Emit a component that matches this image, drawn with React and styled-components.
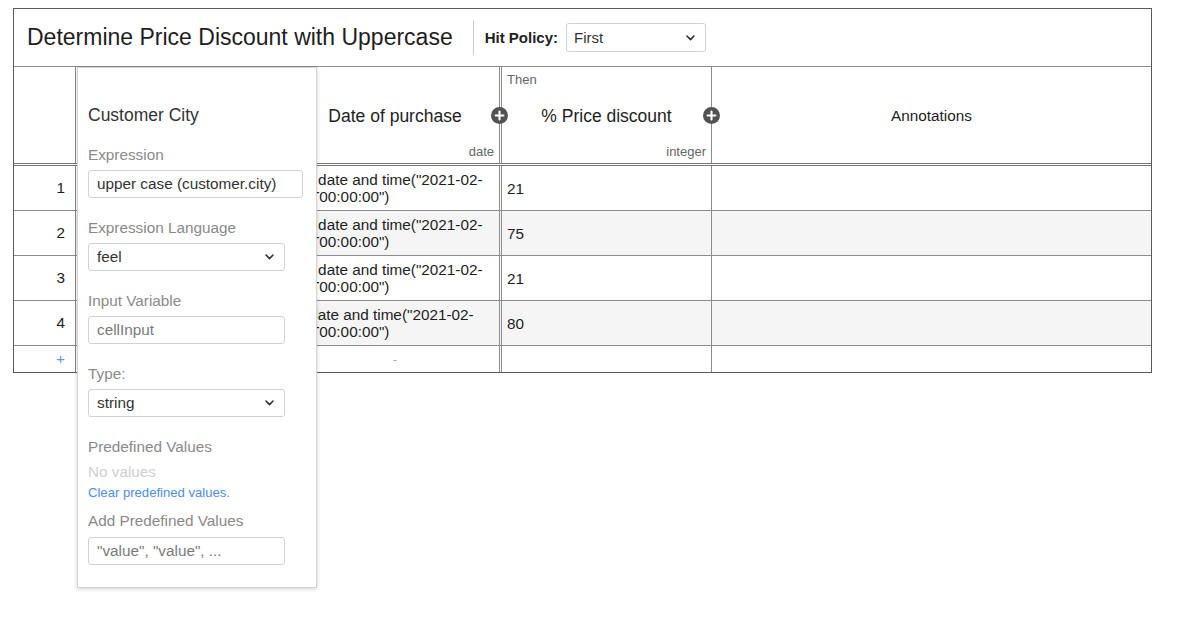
import React from 'react';
import styled, { createGlobalStyle } from 'styled-components';

const FONT = `"Liberation Sans", Arial, Helvetica, sans-serif`;
const LINE = '#8c8c8c';

const GlobalStyle = createGlobalStyle`
  html, body { margin: 0; padding: 0; background: #fff; }
  body { font-family: ${FONT}; color: #222; }
  *, *::before, *::after { box-sizing: border-box; }
`;

const Page = styled.div`
  width: 1190px;
  height: 644px;
  padding: 8px 0 0 13px;
`;

const Container = styled.div`
  position: relative;
  width: 1139px;
  border: 1px solid #5a5a5a;
`;

const TitleBar = styled.div`
  display: flex;
  align-items: center;
  height: 58px;
  padding-left: 13px;
  border-bottom: 1px solid ${LINE};
`;

const Title = styled.h1`
  margin: 0 20px 0 0;
  font-size: 23px;
  font-weight: normal;
  line-height: 1;
  color: #1e1e1e;
  white-space: nowrap;
`;

const HitPolicy = styled.div`
  display: flex;
  align-items: center;
  gap: 8px;
  height: 35px;
  padding-left: 11px;
  border-left: 1px solid #c8c8c8;
`;

const HitLabel = styled.span`
  font-size: 15px;
  font-weight: bold;
  color: #222;
`;

const SelectBox = styled.div`
  display: flex;
  align-items: center;
  justify-content: space-between;
  width: ${(p) => p.$width}px;
  height: ${(p) => p.$height}px;
  padding: 0 10px 0 ${(p) => p.$padLeft}px;
  border: 1px solid #d2d2d2;
  border-radius: 3px;
  background: #fff;
  font-size: ${(p) => p.$size}px;
  color: #333;
`;

const Row = styled.div`
  display: grid;
  grid-template-columns: 62px 215px 211px 210px 1fr;
  height: ${(p) => p.$h}px;
  border-bottom: ${(p) => p.$bottom || `1px solid ${LINE}`};
  background: ${(p) => (p.$alt ? '#f5f5f5' : '#fff')};
`;

const cellBorder = (p) =>
  p.$last ? 'none' : p.$double ? `3px double ${LINE}` : `1px solid ${LINE}`;

const HeadCell = styled.div`
  position: relative;
  display: grid;
  grid-template-rows: 15px 1fr 15px;
  padding: 5px 5px 4px;
  border-right: ${cellBorder};
  background: #fff;
`;

const TopLabel = styled.div`
  font-size: 13px;
  line-height: 15px;
  color: #666;
`;

const HeadName = styled.div`
  align-self: center;
  justify-self: center;
  font-size: 17.5px;
  line-height: 20px;
  color: #1e1e1e;
  white-space: nowrap;
`;

const TypeLabel = styled.div`
  justify-self: end;
  font-size: 13px;
  line-height: 15px;
  color: #666;
`;

const AnnoHead = styled.div`
  display: flex;
  align-items: center;
  justify-content: center;
  font-size: 15.3px;
  color: #1e1e1e;
`;

const AddButton = styled.span`
  position: absolute;
  z-index: 2;
  top: 50%;
  right: ${(p) => p.$offset}px;
  width: 17px;
  height: 17px;
  margin-top: -8px;
  display: flex;
`;

const IndexCell = styled.div`
  display: flex;
  align-items: center;
  justify-content: flex-end;
  padding-right: 10px;
  border-right: 1px solid ${LINE};
  background: #fff;
  font-size: 15.3px;
  color: ${(p) => (p.$add ? '#5b98ea' : '#1e1e1e')};
`;

const Cell = styled.div`
  display: flex;
  align-items: center;
  justify-content: ${(p) => (p.$center ? 'center' : 'flex-start')};
  padding: 5px 5px 5px ${(p) => (p.$tight ? 2 : 5)}px;
  overflow: hidden;
  border-right: ${cellBorder};
  font-size: 15.3px;
  line-height: 17px;
  color: #1e1e1e;
`;

const Op = styled.span`
  margin-right: 3px;
`;

const Dash = styled.span`
  font-size: 13px;
  color: #aaa;
`;

const Popup = styled.div`
  position: absolute;
  z-index: 10;
  left: 63px;
  top: 58px;
  width: 240px;
  display: flex;
  flex-direction: column;
  padding: 37px 12px 22px 10px;
  background: #fff;
  border: 1px solid #d4d4d4;
  box-shadow: 0 1px 4px rgba(0, 0, 0, 0.18);
`;

const PopupTitle = styled.div`
  margin-bottom: 20px;
  font-size: 17.5px;
  line-height: 20px;
  color: #333;
`;

const Field = styled.div`
  display: flex;
  flex-direction: column;
  gap: 5px;
  margin-top: ${(p) => p.$mt || 0}px;
`;

const Label = styled.div`
  font-size: 15.3px;
  line-height: 20px;
  color: #8a8a8a;
  margin-top: ${(p) => p.$mt || 0}px;
`;

const TextInput = styled.input`
  width: ${(p) => p.$width}px;
  height: 28px;
  margin-top: ${(p) => p.$mt || 0}px;
  padding: 0 8px;
  border: 1px solid #d2d2d2;
  border-radius: 3px;
  outline: none;
  font-family: ${FONT};
  font-size: 15.3px;
  color: #333;
  &::placeholder {
    color: #7a7a7a;
  }
`;

const Muted = styled.div`
  margin-top: 5px;
  font-size: 15.3px;
  line-height: 20px;
  color: #cfcfcf;
`;

const Link = styled.a`
  margin-top: 3px;
  font-size: 13.1px;
  line-height: 16px;
  color: #4a8ef0;
  text-decoration: none;
  cursor: pointer;
`;

const Chevron = () => (
  <svg width="9" height="6" viewBox="0 0 9 6">
    <polyline points="1,1 4.5,4.6 8,1" fill="none" stroke="#333" strokeWidth="1.6" strokeLinecap="round" strokeLinejoin="round" />
  </svg>
);

const PlusCircle = () => (
  <svg width="17" height="17" viewBox="0 0 17 17">
    <circle cx="8.5" cy="8.5" r="8.5" fill="#525252" />
    <path d="M8.5 4.6 V12.4 M4.6 8.5 H12.4" stroke="#fff" strokeWidth="2.1" strokeLinecap="round" />
  </svg>
);

const rules = [
  { op: '<=', value: '21' },
  { op: '<=', value: '75' },
  { op: '<=', value: '21' },
  { op: '<', value: '80' },
];

export default function App() {
  return (
    <Page>
      <GlobalStyle />
      <Container>
        <TitleBar>
          <Title>Determine Price Discount with Uppercase</Title>
          <HitPolicy>
            <HitLabel>Hit Policy:</HitLabel>
            <SelectBox $width={140} $height={29} $padLeft={7} $size={15}>
              <span>First</span>
              <Chevron />
            </SelectBox>
          </HitPolicy>
        </TitleBar>

        <Row $h={99} $bottom={`3px double #777`}>
          <HeadCell />
          <HeadCell />
          <HeadCell $double>
            <TopLabel />
            <HeadName>Date of purchase</HeadName>
            <TypeLabel>date</TypeLabel>
            <AddButton $offset={-9}>
              <PlusCircle />
            </AddButton>
          </HeadCell>
          <HeadCell>
            <TopLabel>Then</TopLabel>
            <HeadName>% Price discount</HeadName>
            <TypeLabel>integer</TypeLabel>
            <AddButton $offset={-9}>
              <PlusCircle />
            </AddButton>
          </HeadCell>
          <HeadCell as={AnnoHead} $last>
            Annotations
          </HeadCell>
        </Row>

        {rules.map((r, i) => (
          <Row key={i} $h={45} $alt={i % 2 === 1}>
            <IndexCell>{i + 1}</IndexCell>
            <Cell />
            <Cell $double $tight>
              <span>
                <Op>{r.op}</Op>
                {' date and time("2021-02-'}
                <wbr />
                {'01T00:00:00")'}
              </span>
            </Cell>
            <Cell>{r.value}</Cell>
            <Cell $last />
          </Row>
        ))}

        <Row $h={26} $bottom="none">
          <IndexCell $add>+</IndexCell>
          <Cell />
          <Cell $center $double>
            <Dash>-</Dash>
          </Cell>
          <Cell />
          <Cell $last />
        </Row>

        <Popup>
          <PopupTitle>Customer City</PopupTitle>
          <Field>
            <Label>Expression</Label>
            <TextInput $width={215} defaultValue="upper case (customer.city)" />
          </Field>
          <Field $mt={20}>
            <Label>Expression Language</Label>
            <SelectBox $width={197} $height={28} $padLeft={8} $size={15.3}>
              <span>feel</span>
              <Chevron />
            </SelectBox>
          </Field>
          <Field $mt={20}>
            <Label>Input Variable</Label>
            <TextInput $width={197} placeholder="cellInput" />
          </Field>
          <Field $mt={20}>
            <Label>Type:</Label>
            <SelectBox $width={197} $height={28} $padLeft={8} $size={15.3}>
              <span>string</span>
              <Chevron />
            </SelectBox>
          </Field>
          <Label $mt={20}>Predefined Values</Label>
          <Muted>No values</Muted>
          <Link>Clear predefined values.</Link>
          <Label $mt={10}>Add Predefined Values</Label>
          <TextInput $width={197} $mt={6} placeholder={'"value", "value", ...'} />
        </Popup>
      </Container>
    </Page>
  );
}
